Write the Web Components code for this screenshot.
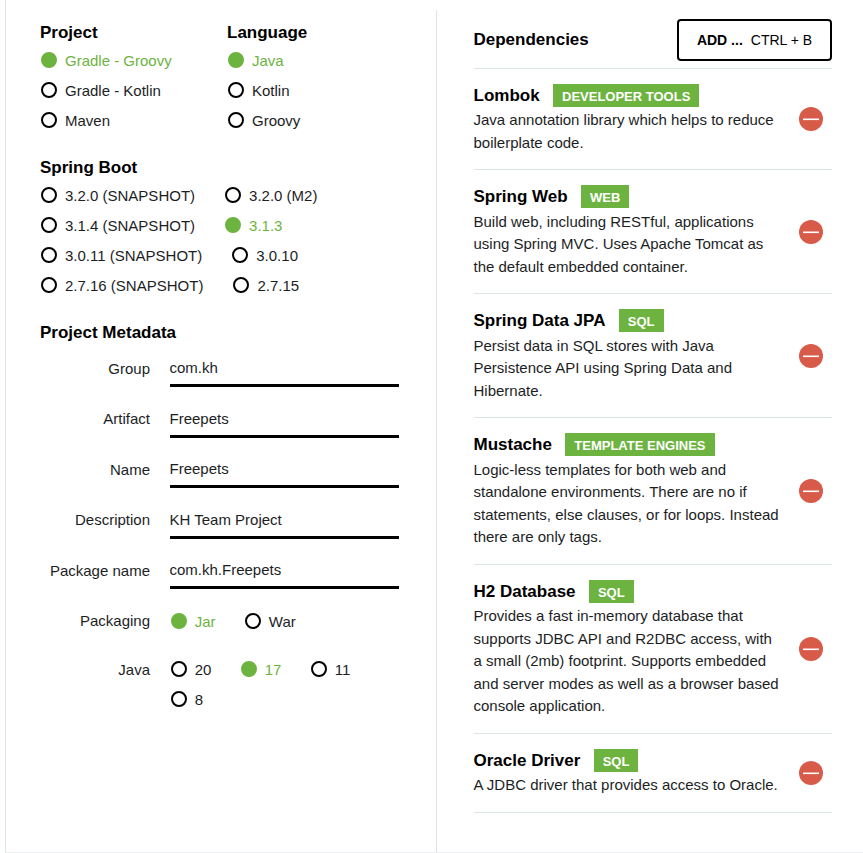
<!DOCTYPE html>
<html lang="en">
<head>
<meta charset="utf-8">
<title>Project setup</title>
<style>
  html, body { margin: 0; height: 853px; overflow: hidden; }
  body { background: #fff; color: #000; font: 15px/30px "Liberation Sans", Arial, sans-serif; --green: #6db33f; --line: #dde6e6; --ink: #1c1e1f; }
</style>
</head>
<body>
<setup-page>
  <div slot="left">
    <option-pair>
      <option-group heading="Project" direction="column">
        <radio-item checked>Gradle - Groovy</radio-item>
        <radio-item>Gradle - Kotlin</radio-item>
        <radio-item>Maven</radio-item>
      </option-group>
      <option-group heading="Language" direction="column">
        <radio-item checked>Java</radio-item>
        <radio-item>Kotlin</radio-item>
        <radio-item>Groovy</radio-item>
      </option-group>
    </option-pair>
    <option-group heading="Spring Boot">
      <radio-item>3.2.0 (SNAPSHOT)</radio-item>
      <radio-item>3.2.0 (M2)</radio-item>
      <radio-item>3.1.4 (SNAPSHOT)</radio-item>
      <radio-item checked>3.1.3</radio-item>
      <radio-item>3.0.11 (SNAPSHOT)</radio-item>
      <radio-item>3.0.10</radio-item>
      <radio-item>2.7.16 (SNAPSHOT)</radio-item>
      <radio-item>2.7.15</radio-item>
    </option-group>
    <metadata-form heading="Project Metadata">
      <text-field label="Group">com.kh</text-field>
      <text-field label="Artifact">Freepets</text-field>
      <text-field label="Name">Freepets</text-field>
      <text-field label="Description">KH Team Project</text-field>
      <text-field label="Package name">com.kh.Freepets</text-field>
      <choice-field label="Packaging">
        <radio-item checked>Jar</radio-item>
        <radio-item>War</radio-item>
      </choice-field>
      <choice-field label="Java">
        <radio-item>20</radio-item>
        <radio-item checked>17</radio-item>
        <radio-item>11</radio-item>
        <radio-item>8</radio-item>
      </choice-field>
    </metadata-form>
  </div>
  <dependency-list slot="right" heading="Dependencies">
    <dependency-item name="Lombok" tag="Developer Tools">Java annotation library which helps to reduce boilerplate code.</dependency-item>
    <dependency-item name="Spring Web" tag="Web">Build web, including RESTful, applications using Spring MVC. Uses Apache Tomcat as the default embedded container.</dependency-item>
    <dependency-item name="Spring Data JPA" tag="SQL">Persist data in SQL stores with Java Persistence API using Spring Data and Hibernate.</dependency-item>
    <dependency-item name="Mustache" tag="Template Engines">Logic-less templates for both web and standalone environments. There are no if statements, else clauses, or for loops. Instead there are only tags.</dependency-item>
    <dependency-item name="H2 Database" tag="SQL">Provides a fast in-memory database that supports JDBC API and R2DBC access, with a small (2mb) footprint. Supports embedded and server modes as well as a browser based console application.</dependency-item>
    <dependency-item name="Oracle Driver" tag="SQL">A JDBC driver that provides access to Oracle.</dependency-item>
  </dependency-list>
</setup-page>
<script>
const HEADING = 'h2 { margin: 0; font-size: 17px; line-height: 26px; font-weight: 700; color: #000; }';

function define(name, render) {
  customElements.define(name, class extends HTMLElement {
    constructor() { super(); this.attachShadow({ mode: 'open' }); }
    connectedCallback() { this.shadowRoot.innerHTML = render(key => this.getAttribute(key) || ''); }
  });
}

define('setup-page', () => `
  <style>
    :host { display: flex; box-sizing: border-box; width: 858px; height: 853px; margin-left: 5px;
            border-left: 1px solid var(--line); border-bottom: 1px solid #e9eeee; }
    .left { box-sizing: border-box; width: 430px; padding: 19px 0 0 34px; }
    .right { flex: 1; margin-top: 10px; padding: 9px 31px 0 36.5px; border-left: 1px solid var(--line); }
  </style>
  <div class="left"><slot name="left"></slot></div>
  <div class="right"><slot name="right"></slot></div>`);

define('option-pair', () => `
  <style>:host { display: grid; grid-template-columns: 187px 1fr; margin-bottom: 19px; }</style>
  <slot></slot>`);

define('option-group', a => `
  <style>
    :host { display: block; }
    ${HEADING}
    h2 { line-height: 24px; padding-top: 2px; }
    .row { display: grid; padding-left: 1px; grid-template-columns: 1fr; }
    .wrap { display: flex; flex-wrap: wrap; column-gap: 30px; width: 300px; padding-left: 1px; margin-bottom: 19px; }
  </style>
  <h2>${a('heading')}</h2>
  <div class="${a('direction') ? 'row' : 'wrap'}"><slot></slot></div>`);

define('radio-item', () => `
  <style>
    :host { display: flex; align-items: center; gap: 8px; height: 30px; color: var(--ink); white-space: nowrap; }
    :host([checked]) { color: var(--green); }
    i { box-sizing: border-box; width: 16px; height: 16px; border: 2px solid #000; border-radius: 50%; }
    :host([checked]) i { background: var(--green); border-color: var(--green); }
    span { line-height: 28px; padding-top: 2px; }
  </style>
  <i></i><span><slot></slot></span>`);

define('metadata-form', a => `
  <style>
    :host { display: block; }
    ${HEADING}
    h2 { line-height: 24px; padding-top: 2px; margin-bottom: 8.2px; }
  </style>
  <h2>${a('heading')}</h2><slot></slot>`);

define('text-field', a => `
  <style>
    :host { display: grid; grid-template-columns: 110px 229px; column-gap: 20px; height: 50.5px; color: var(--ink); }
    label { text-align: right; padding-top: .6px; white-space: nowrap; }
    div { box-sizing: border-box; height: 34px; border-bottom: 3px solid #000; margin-left: -.5px; margin-right: .5px; }
  </style>
  <label>${a('label')}</label><div><slot></slot></div>`);

define('choice-field', a => `
  <style>
    :host { display: grid; grid-template-columns: 110px 215px; column-gap: 20.7px; color: var(--ink); padding-bottom: 18px; }
    label { text-align: right; padding-top: .5px; }
    div { display: flex; flex-wrap: wrap; column-gap: 29.3px; }
  </style>
  <label>${a('label')}</label><div><slot></slot></div>`);

define('dependency-list', a => `
  <style>
    :host { display: block; }
    header { display: flex; justify-content: space-between; height: 48.8px; border-bottom: 1px solid var(--line); }
    ${HEADING}
    h2 { line-height: 41px; }
    button { box-sizing: border-box; display: flex; align-items: center; justify-content: center; gap: 8px; width: 155px; height: 42px;
             border: 2px solid #000; border-radius: 4px; background: #fff; color: #000; padding: 0; font: 14px/20px "Liberation Sans", Arial, sans-serif; }
  </style>
  <header><h2>${a('heading')}</h2><button><b>ADD ...</b><span>CTRL + B</span></button></header>
  <slot></slot>`);

define('dependency-item', a => `
  <style>
    :host { display: grid; grid-template-columns: 310px 24px; justify-content: space-between; align-items: center;
            padding: 15px 9px 15px 0; border-bottom: 1px solid var(--line); color: var(--ink); }
    .head { display: flex; align-items: center; gap: 13.4px; height: 23px; margin-bottom: 2.5px; }
    strong { font-size: 17px; line-height: 23px; color: #000; }
    em { padding: 2px 9px 0; font: bold 13px/21px "Liberation Sans", Arial, sans-serif; color: #fff; background: var(--green); text-transform: uppercase; }
    p { margin: 0; line-height: 22.5px; }
    svg { display: block; }
  </style>
  <div><div class="head"><strong>${a('name')}</strong><em>${a('tag')}</em></div><p><slot></slot></p></div>
  <svg width="24" height="24" viewBox="0 0 24 24"><circle cx="12" cy="12" r="12" fill="#d85a49"/><path d="M4 12.3H20" stroke="#fff" stroke-width="1.6"/></svg>`);
</script>
</body>
</html>
